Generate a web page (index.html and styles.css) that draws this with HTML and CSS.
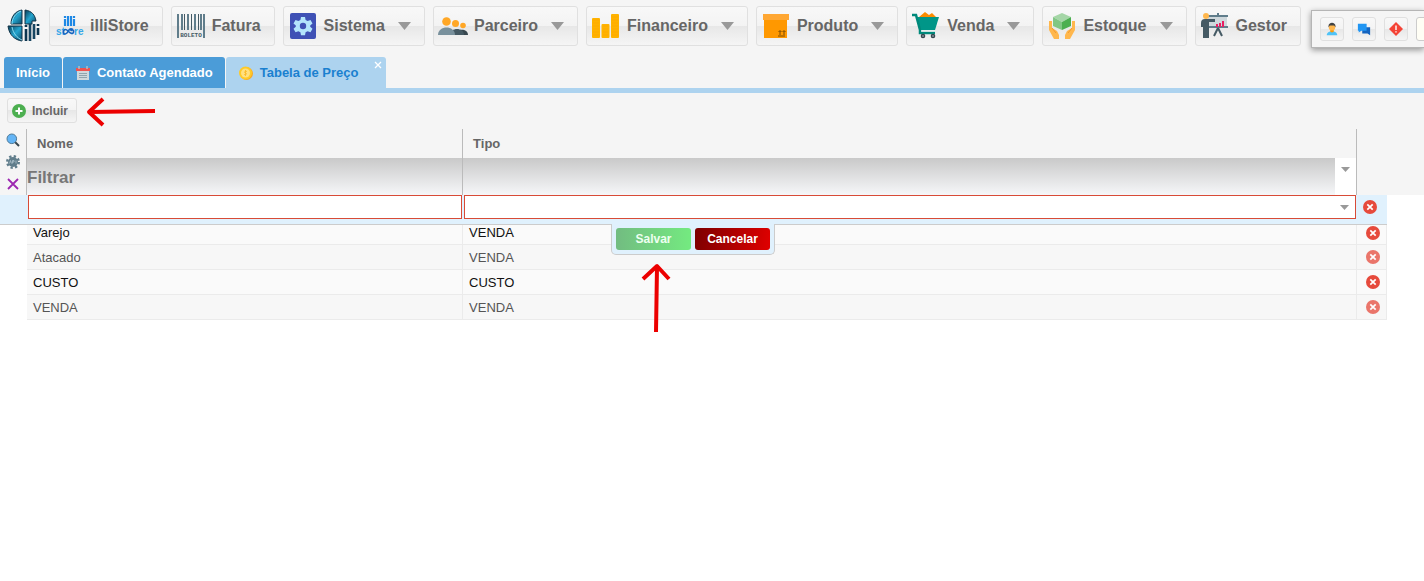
FILE: index.html
```
<!DOCTYPE html>
<html lang="pt-BR">
<head>
    <meta charset="UTF-8">
    <meta name="viewport" content="width=device-width, initial-scale=1.0">
    <title>Tabela de Preço</title>
    <link rel="stylesheet" href="styles.css">
</head>
<body>
    <!-- Shared icon shapes -->
    <svg class="defs" aria-hidden="true">
        <symbol id="delete" viewBox="0 0 14 14">
            <circle cx="7" cy="7" r="7" fill="#e64a3c"/>
            <path d="M4.300 4.300l5.400 5.400M9.700 4.300l-5.400 5.400" stroke="#fff" stroke-width="1.700"/>
        </symbol>
        <symbol id="down" viewBox="0 0 13 8">
            <path d="M0 0h13L6.500 8z" fill="#999"/>
        </symbol>
    </svg>

    <header>
        <nav class="toolbar">
            <svg class="logo" viewBox="0 0 34 34">
                <defs>
                    <linearGradient id="blue" x1="0" y1="0" x2="1" y2="1">
                        <stop offset="0" stop-color="#0a3a52"/>
                        <stop offset=".5" stop-color="#24a5cf"/>
                        <stop offset="1" stop-color="#0b4a68"/>
                    </linearGradient>
                </defs>
                <path d="M15 1v14H4C4 8 8 2 15 1z" fill="url(#blue)" stroke="#123347"/>
                <path d="M18 1c7 1 10 5 11 11h-4v3h-7z" fill="url(#blue)" stroke="#123347"/>
                <path d="M1 17h14v15C8 31 2 26 1 17z" fill="url(#blue)" stroke="#123347"/>
                <path d="M5 15C5 9 9 4 14 2M5 18c1 6 5 11 10 13" fill="none" stroke="#8bdcf2"/>
                <path d="M19 20v12M23 15v17M27 15v15M31 19v7M19 16v2M31 15v2" stroke="#0d3650" stroke-width="2.600"/>
                <path d="M23 15v17M27 15v15" stroke="#2f6d8c" stroke-width=".600"/>
            </svg>

            <button class="menu-btn">
                <svg viewBox="0 0 32 32">
                    <path d="M11 9v7M14 6v10M17 6v10M20 9v7M11 6v2M20 6v2" stroke="#1e88e5" stroke-width="2.200"/>
                    <text class="store" x="2" y="25">st</text>
                    <text class="store" x="20" y="25">re</text>
                    <path d="M19 19.500c-3-1.500-4 0-5 2s-4 4-4.500 1 2-4 4.500-1.500 5 3.500 5.500 1-1.500-2.500-3-1" fill="none" stroke="#1565c0" stroke-width="1.600"/>
                </svg>
                <span>illiStore</span>
            </button>

            <button class="menu-btn">
                <svg viewBox="0 0 32 32">
                    <path d="M2 4v24M28 4v24" stroke="#607d8b" stroke-width="2"/>
                    <path d="M6 4v16M12 4v16M19 4v16M25 4v16" stroke="#607d8b" stroke-width="2"/>
                    <path d="M8.500 4v16M15.500 4v16M22.500 4v16" stroke="#455a64"/>
                    <text class="boleto" x="15" y="27" text-anchor="middle">BOLETO</text>
                </svg>
                <span>Fatura</span>
            </button>

            <button class="menu-btn">
                <svg viewBox="0 0 32 32">
                    <rect x="2" y="3" width="26" height="26" rx="2" fill="#3f51b5"/>
                    <path d="M13 7h4l.600 3 2 1 2.900-1 2 3.500-2.300 2v1.200l2.300 2-2 3.500-2.900-1-2 1-.600 3h-4l-.600-3-2-1-2.900 1-2-3.500 2.300-2v-1.200l-2.300-2 2-3.500 2.900 1 2-1z" fill="#b3e5fc"/>
                    <circle cx="15" cy="16" r="3.200" fill="#3f51b5"/>
                </svg>
                <span>Sistema</span>
                <svg class="arrow"><use href="#down"/></svg>
            </button>

            <button class="menu-btn">
                <svg viewBox="0 0 32 32">
                    <path d="M18 25c0-7 12-7 12 0z" fill="#37474f"/>
                    <path d="M12 25c0-8 14-8 14 0z" fill="#455a64"/>
                    <path d="M0 25c0-10 17-10 17 0z" fill="#78909c"/>
                    <circle cx="8.500" cy="11.500" r="4.300" fill="#ffa726"/>
                    <circle cx="17.500" cy="13.500" r="3.500" fill="#ffa726"/>
                    <circle cx="25" cy="15.500" r="2.800" fill="#ffa726"/>
                </svg>
                <span>Parceiro</span>
                <svg class="arrow"><use href="#down"/></svg>
            </button>

            <button class="menu-btn">
                <svg viewBox="0 0 32 32">
                    <rect x="1" y="8" width="8" height="20" rx="1" fill="#ffb300"/>
                    <rect x="10.500" y="14" width="8" height="14" rx="1" fill="#ffb300"/>
                    <rect x="20" y="4" width="8" height="24" rx="1" fill="#ffb300"/>
                    <path d="M2 10h6M2 13h6M2 16h6M2 19h6M2 22h6M2 25h6M12 16h5M12 19h5M12 22h5M12 25h5M21 7h6M21 10h6M21 13h6M21 16h6M21 19h6M21 22h6M21 25h6" stroke="#ffa000" stroke-width=".500"/>
                </svg>
                <span>Financeiro</span>
                <svg class="arrow"><use href="#down"/></svg>
            </button>

            <button class="menu-btn">
                <svg viewBox="0 0 32 32">
                    <path d="M3 9h23v19H3z" fill="#ff9800"/>
                    <path d="M2 4h26v6H2z" fill="#ffa733"/>
                    <path d="M19 21v4M23 21v4M17.500 22l1.500-1.500 1.500 1.500M21.500 22l1.500-1.500 1.500 1.500M17 26h7" fill="none" stroke="#6b4200" stroke-width=".900"/>
                </svg>
                <span>Produto</span>
                <svg class="arrow"><use href="#down"/></svg>
            </button>

            <button class="menu-btn">
                <svg viewBox="0 0 32 32">
                    <path d="M8 7l6-5 4 3 3-2 4 4z" fill="#fb8c00"/>
                    <path d="M5 7h23l-4 13H9z" fill="#009688"/>
                    <path d="M1 5h4l4 15v3h15" fill="none" stroke="#00897b" stroke-width="2.500"/>
                    <path d="M10 21h14" stroke="#e0f2f1"/>
                    <circle cx="12" cy="26" r="2.300" fill="#37474f"/>
                    <circle cx="22" cy="26" r="2.300" fill="#37474f"/>
                    <circle cx="12" cy="26" r=".800" fill="#b0bec5"/>
                    <circle cx="22" cy="26" r=".800" fill="#b0bec5"/>
                </svg>
                <span>Venda</span>
                <svg class="arrow"><use href="#down"/></svg>
            </button>

            <button class="menu-btn">
                <svg viewBox="0 0 32 32">
                    <path d="M15 3l9 4-9 5-9-5z" fill="#a5d6a7"/>
                    <path d="M6 7l9 5v8l-9-4z" fill="#81c784"/>
                    <path d="M24 7l-9 5v8l9-4z" fill="#4caf50"/>
                    <path d="M2 11h3v7l5 3 2 4v4H7l-5-9zM28 11h-3v7l-5 3-2 4v4h5l5-9z" fill="#ffb74d"/>
                    <path d="M5 18l4 5M25 18l-4 5" stroke="#f29a2e" fill="none"/>
                </svg>
                <span>Estoque</span>
                <svg class="arrow"><use href="#down"/></svg>
            </button>

            <button class="menu-btn">
                <svg viewBox="0 0 32 32">
                    <path d="M8 6h19v11H8z" fill="#cfd8dc"/>
                    <path d="M7 5h21v2H7zM8 16h20v2H8zM17 3h2v3h-2z" fill="#607d8b"/>
                    <path d="M18 18l-4 8M18 18l4 8" stroke="#455a64" stroke-width="2"/>
                    <path d="M16 17v-3h2v3zM19 17v-4h2v4zM22 17v-6h2v6z" fill="#e91e63"/>
                    <circle cx="6" cy="6" r="3" fill="#ffb74d"/>
                    <path d="M1 13q0-4 4-4h10v3H9v16H3V17H1z" fill="#455a64"/>
                </svg>
                <span>Gestor</span>
            </button>

            <div class="quick-panel">
                <button class="quick-btn" aria-label="Usuário">
                    <svg viewBox="0 0 16 16">
                        <path d="M2 15c0-6 12-6 12 0z" fill="#4fc3f7"/>
                        <path d="M6 8h4v3l-2 1-2-1z" fill="#ff9800"/>
                        <circle cx="8" cy="6" r="3.700" fill="#ffb74d"/>
                        <path d="M4 6c-1-7 9-7 8 0L10.500 4h-5z" fill="#424242"/>
                    </svg>
                </button>
                <button class="quick-btn" aria-label="Mensagens">
                    <svg viewBox="0 0 16 16">
                        <path d="M6 6h9v9l-3-2H6z" fill="#1565c0"/>
                        <path d="M1 2h10v8H5l-3 2V10H1z" fill="#2196f3"/>
                    </svg>
                </button>
                <button class="quick-btn" aria-label="Alertas">
                    <svg viewBox="0 0 16 16">
                        <path d="M8 0L16 8 8 16 0 8z" fill="#f44336"/>
                        <path d="M8 4v5M8 10.500v1.500" stroke="#fff" stroke-width="1.600"/>
                    </svg>
                </button>
                <button class="quick-btn note" aria-label="Notas"></button>
            </div>
        </nav>

        <nav class="tabs">
            <a class="tab" href="#">Início</a>
            <a class="tab" href="#">
                <svg viewBox="0 0 16 16">
                    <path d="M2 4h12v11H2z" fill="#cfd8dc"/>
                    <path d="M1 3h14v3H1z" fill="#ef5350"/>
                    <path d="M4 1v3M12 1v3" stroke="#b0bec5" stroke-width="1.500"/>
                    <path d="M4 8.500h8M4 10.500h8M4 12.500h8" stroke="#90a4ae"/>
                </svg>
                Contato Agendado
            </a>
            <a class="tab active" href="#">
                <svg viewBox="0 0 16 16">
                    <circle cx="8.500" cy="8.500" r="6.500" fill="#f9a825"/>
                    <circle cx="7.500" cy="8" r="6.500" fill="#ffca28"/>
                    <circle cx="7.500" cy="8" r="4.500" fill="#ffe082"/>
                    <path d="M9 6.500c-3-1-3 1.500-1.500 1.500s1.500 2.500-1.500 1.500M7.500 5v6" fill="none" stroke="#f9b825" stroke-width=".800"/>
                </svg>
                Tabela de Preço
                <button class="tab-close" aria-label="Fechar aba">
                    <svg viewBox="0 0 8 8"><path d="M1 1l6 6M7 1L1 7" stroke="#fff" stroke-width="1.300"/></svg>
                </button>
            </a>
        </nav>
    </header>

    <main>
        <div class="actions">
            <button class="add-btn">
                <svg viewBox="0 0 14 14">
                    <circle cx="7" cy="7" r="7" fill="#4caf50"/>
                    <path d="M7 3.500v7M3.500 7h7" stroke="#fff" stroke-width="2"/>
                </svg>
                Incluir
            </button>
            <svg class="pointer-left" viewBox="0 0 70 32">
                <path d="M69 15L4 16M17 3L3 16l14 13" fill="none" stroke="#ec0000" stroke-width="4" stroke-linejoin="round"/>
            </svg>
        </div>

        <div class="grid">
            <table>
                <colgroup>
                    <col class="col-tools">
                    <col class="col-name">
                    <col>
                    <col class="col-delete">
                </colgroup>
                <thead>
                    <tr class="head-row">
                        <td class="tools" rowspan="2">
                            <div class="tool-list">
                                <button aria-label="Pesquisar">
                                    <svg viewBox="0 0 14 14">
                                        <path d="M9 9l4 4" stroke="#37474f" stroke-width="2"/>
                                        <circle cx="5.800" cy="5.800" r="4.800" fill="#64b5f6" stroke="#507b98"/>
                                    </svg>
                                </button>
                                <button aria-label="Configurar">
                                    <svg viewBox="0 0 14 14">
                                        <circle cx="7" cy="7" r="5.800" fill="none" stroke="#607d8b" stroke-width="2.400" stroke-dasharray="2.300 2.255"/>
                                        <circle cx="7" cy="7" r="5" fill="#607d8b"/>
                                        <path d="M3.500 8.500l1-3 1 3M6.500 8.500v-3h1.500v1.500H6.500M10 5.500v3" fill="none" stroke="#b0c4ce" stroke-width=".800"/>
                                    </svg>
                                </button>
                                <button aria-label="Limpar filtro">
                                    <svg viewBox="0 0 14 14"><path d="M2 2l10 10M12 2L2 12" stroke="#9c27b0" stroke-width="1.800"/></svg>
                                </button>
                            </div>
                        </td>
                        <th>Nome</th>
                        <th>Tipo</th>
                        <td></td>
                    </tr>
                    <tr class="filter-row">
                        <td><input type="text" placeholder="Filtrar" aria-label="Filtrar por nome"></td>
                        <td><select aria-label="Filtrar por tipo"><option></option><option>VENDA</option><option>CUSTO</option></select></td>
                        <td></td>
                    </tr>
                </thead>
                <tbody>
                    <tr class="edit-row">
                        <td></td>
                        <td><input type="text" aria-label="Nome"></td>
                        <td><select aria-label="Tipo"><option></option><option>VENDA</option><option>CUSTO</option></select></td>
                        <td><button class="delete-btn" aria-label="Excluir"><svg><use href="#delete"/></svg></button></td>
                    </tr>
                    <tr class="data-row covered">
                        <td></td>
                        <td>Varejo</td>
                        <td>VENDA</td>
                        <td><button class="delete-btn" aria-label="Excluir"><svg><use href="#delete"/></svg></button></td>
                    </tr>
                    <tr class="data-row alt">
                        <td></td>
                        <td>Atacado</td>
                        <td>VENDA</td>
                        <td><button class="delete-btn" aria-label="Excluir"><svg><use href="#delete"/></svg></button></td>
                    </tr>
                    <tr class="data-row">
                        <td></td>
                        <td>CUSTO</td>
                        <td>CUSTO</td>
                        <td><button class="delete-btn" aria-label="Excluir"><svg><use href="#delete"/></svg></button></td>
                    </tr>
                    <tr class="data-row alt">
                        <td></td>
                        <td>VENDA</td>
                        <td>VENDA</td>
                        <td><button class="delete-btn" aria-label="Excluir"><svg><use href="#delete"/></svg></button></td>
                    </tr>
                </tbody>
            </table>

            <div class="edit-buttons">
                <button class="save-btn">Salvar</button>
                <button class="cancel-btn">Cancelar</button>
                <svg class="pointer-up" viewBox="0 0 32 70">
                    <path d="M16 69L17 4M3 16L17 3l12 13" fill="none" stroke="#ec0000" stroke-width="4" stroke-linejoin="round"/>
                </svg>
            </div>
        </div>
    </main>
</body>
</html>
```
FILE: styles.css
```
* {
    margin: 0;
    padding: 0;
    box-sizing: border-box;
    font-family: "Liberation Sans", Arial, sans-serif;
}

body {
    min-height: 100vh;
    background-color: #fff;
}

button {
    border: none;
    background: none;
    cursor: pointer;
}

svg {
    display: block;
    flex: none;
}

.defs {
    position: absolute;
    width: 0;
    height: 0;
}

header {
    background-color: #f5f5f5;
    border-bottom: 5px solid #add3ef;
}

/* Toolbar */
.toolbar {
    position: relative;
    display: flex;
    gap: 8px;
    padding: 6px 0 11px 7px;
    overflow: hidden;
}

.logo {
    width: 34px;
    height: 34px;
    margin-top: 3px;
}

.menu-btn,
.quick-btn,
.add-btn {
    display: flex;
    align-items: center;
    flex: none;
    border: 1px solid #e0e0e0;
    border-radius: 3px;
    background: linear-gradient(#f8f8f8, #f3f3f3 50%, #e7e7e7 50%, #f5f5f5);
    color: #666;
    font-weight: bold;
}

.menu-btn {
    height: 40px;
    padding: 0 13px 0 4px;
    font-size: 16px;
}

.menu-btn svg {
    width: 32px;
    height: 32px;
    margin-right: 4px;
}

.menu-btn .arrow {
    width: 13px;
    height: 8px;
    margin: 0 0 0 13px;
}

.store {
    font-size: 10px;
    fill: #35a7e8;
}

.boleto {
    font-family: "Liberation Mono", monospace;
    font-size: 6px;
    font-weight: bold;
    fill: #455a64;
}

.quick-panel {
    position: absolute;
    top: 10px;
    right: 0;
    display: flex;
    align-items: center;
    gap: 8px;
    width: 113px;
    height: 38px;
    padding-left: 8px;
    border: 1px solid #b5b5b5;
    border-right: none;
    background-color: #f5f5f5;
    box-shadow: 0 2px 6px rgba(0, 0, 0, 0.4);
    overflow: hidden;
}

.quick-btn {
    justify-content: center;
    width: 24px;
    height: 24px;
}

.quick-btn svg {
    width: 14px;
    height: 14px;
}

.quick-btn.note {
    border-color: #ccc;
    background: #fffef5;
}

/* Tabs */
.tabs {
    display: flex;
    gap: 1px;
    padding-left: 4px;
}

.tab {
    position: relative;
    display: flex;
    align-items: center;
    gap: 6px;
    height: 31px;
    padding: 0 12px;
    border-radius: 3px 3px 0 0;
    background-color: #4b9cd8;
    color: #fff;
    font-size: 13px;
    font-weight: bold;
    text-decoration: none;
}

.tab svg {
    width: 16px;
    height: 16px;
}

.tab.active {
    padding-right: 28px;
    background-color: #add3ef;
    color: #1a80cf;
}

.tab-close {
    position: absolute;
    top: 4px;
    right: 4px;
}

.tab-close svg {
    width: 8px;
    height: 8px;
}

/* Actions */
.actions {
    display: flex;
    gap: 9px;
    height: 36px;
    padding: 5px 7px 0;
    background-color: #f5f5f5;
}

.add-btn {
    gap: 6px;
    height: 25px;
    padding: 0 8px 0 4px;
    font-size: 12px;
}

.add-btn svg {
    width: 14px;
    height: 14px;
}

.pointer-left {
    width: 70px;
    height: 32px;
    margin-top: -2px;
}

/* Grid */
.grid {
    position: relative;
    padding-right: 37px;
    background: linear-gradient(#f5f5f5 66px, #fff 66px);
}

table {
    width: 100%;
    table-layout: fixed;
    border-collapse: separate;
    border-spacing: 0;
    font-size: 13px;
}

.col-tools {
    width: 27px;
}

.col-name {
    width: 31.44%;
}

.col-delete {
    width: 30px;
}

thead th,
thead td {
    border-right: 1px solid #bbb;
}

thead td:last-child {
    border-right: none;
}

.head-row th {
    height: 29px;
    padding-left: 10px;
    color: #666;
    text-align: left;
}

.tools {
    vertical-align: top;
}

.tool-list {
    display: flex;
    flex-direction: column;
    align-items: center;
    gap: 8px;
    padding-top: 4px;
}

.tool-list svg {
    width: 14px;
    height: 14px;
}

.filter-row td {
    height: 37px;
}

.filter-row input,
.filter-row select {
    display: block;
    width: 100%;
    height: 37px;
    padding-top: 2px;
    border: none;
    border-radius: 0;
    background: linear-gradient(#c9c9c9, #f6f7f9);
    color: #777;
    font-size: 17px;
    font-weight: bold;
}

.filter-row input::placeholder {
    color: #777;
}

select {
    appearance: none;
}

.filter-row select {
    background:
        url("data:image/svg+xml,%3Csvg xmlns='http://www.w3.org/2000/svg' width='9' height='5'%3E%3Cpath d='M0 0h9L4.500 5z' fill='%23999'/%3E%3C/svg%3E") no-repeat right 6px top 9px,
        linear-gradient(#fff, #fff) no-repeat right / 21px 100%,
        linear-gradient(#c9c9c9, #f6f7f9);
}

/* Row being edited */
.edit-row td {
    height: 30px;
    padding-left: 1px;
    border-bottom: 1px solid #ccc;
    background-color: #e0f1fd;
    vertical-align: top;
}

.edit-row input,
.edit-row select {
    display: block;
    width: 100%;
    height: 24px;
    padding: 0 5px;
    border: 1px solid #d84b37;
    border-radius: 0;
    background-color: #fff;
    font-size: 13px;
}

.edit-row td:nth-child(2),
.edit-row td:nth-child(3) {
    padding-right: 1px;
}

.edit-row select {
    background: #fff url("data:image/svg+xml,%3Csvg xmlns='http://www.w3.org/2000/svg' width='9' height='5'%3E%3Cpath d='M0 0h9L4.500 5z' fill='%23999'/%3E%3C/svg%3E") no-repeat right 6px center;
}

.delete-btn svg {
    width: 14px;
    height: 14px;
}

.edit-row .delete-btn {
    padding: 5px;
}

/* Save / cancel box hanging under the edited row */
.edit-buttons {
    position: absolute;
    top: 95px;
    left: calc(50% - 19px);
    display: flex;
    gap: 4px;
    padding: 4px;
    border: 1px solid #ccc;
    border-top: none;
    border-radius: 0 0 5px 5px;
    background-color: #e0f1fd;
    transform: translateX(-50%);
}

.save-btn,
.cancel-btn {
    width: 75px;
    height: 22px;
    border-radius: 3px;
    color: #fff;
    font-size: 12px;
    font-weight: bold;
}

.save-btn {
    background: linear-gradient(90deg, #72bc81, #74ea80);
    color: #eefff0;
}

.cancel-btn {
    background: linear-gradient(100deg, #7c0000, #e00000);
}

.pointer-up {
    position: absolute;
    top: 39px;
    left: 28px;
    width: 32px;
    height: 70px;
}

/* Data rows */
.data-row td {
    height: 25px;
    padding: 0 6px;
    border-right: 1px solid #ebebeb;
    border-bottom: 1px solid #ebebeb;
    background-color: #fafafa;
    color: #111;
}

.data-row td:first-child {
    border: none;
    background: none;
}

.data-row.covered td {
    height: 20px;
    padding-bottom: 4px;
}

.data-row.alt td {
    background-color: #f7f7f7;
    color: #555;
}

.data-row.alt td:first-child {
    background: none;
}

.data-row td:last-child {
    padding-left: 9px;
}

.data-row .delete-btn {
    display: block;
}

.data-row.alt .delete-btn {
    opacity: 0.75;
}
```
